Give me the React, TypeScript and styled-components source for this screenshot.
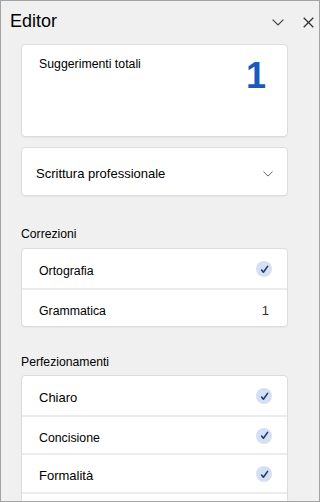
import React from "react";
import styled, { createGlobalStyle } from "styled-components";

const Global = createGlobalStyle`
  html, body { margin: 0; padding: 0; background: #f0f0f0; }
  * { box-sizing: border-box; }
  body { font-family: "Liberation Sans", Arial, sans-serif; color: #201f1e; }
`;

const Pane = styled.div`
  width: 320px;
  height: 502px;
  border: 1px solid #a3a3a3;
  background: #f0f0f0;
  overflow: hidden;
  display: flex;
  flex-direction: column;
`;

const Header = styled.header`
  height: 43px;
  flex: none;
  display: flex;
  align-items: flex-start;
  padding: 11px 1px 0 9px;
`;

const Title = styled.h1`
  flex: 1;
  margin: 0;
  font-size: 18px;
  line-height: 18px;
  font-weight: 400;
  color: #000;
`;

const HeaderActions = styled.div`
  display: flex;
  gap: 10px;
`;

const IconButton = styled.button`
  width: 20px;
  height: 20px;
  padding: 0;
  border: none;
  background: none;
  display: flex;
  align-items: center;
  justify-content: center;
  color: #3b3b3b;
`;

const Card = styled.div<{ $height?: number }>`
  flex: none;
  margin: 0 31px 0 20px;
  background: #fff;
  border: 1px solid #dcdcdc;
  border-radius: 4px;
  box-shadow: 0 1px 1px rgba(0, 0, 0, 0.04);
  ${(p) => (p.$height ? `height: ${p.$height}px;` : "")}
`;

const TotalsCard = styled(Card)`
  display: flex;
  justify-content: space-between;
  align-items: flex-start;
  padding: 11px 21px 0 17px;
`;

const TotalsLabel = styled.span`
  font-size: 12.3px;
  line-height: 16px;
  color: #000;
`;

const TotalsNumber = styled.span`
  font-size: 36px;
  line-height: 36px;
  font-weight: 700;
  color: #185abd;
  margin-top: 2px;
`;

const StyleCard = styled(Card)`
  margin-top: 10px;
  display: flex;
  align-items: center;
  justify-content: space-between;
  padding: 4px 14px 0 14px;
`;

const StyleLabel = styled.span`
  font-size: 13px;
  line-height: 16px;
  color: #000;
`;

const SectionLabel = styled.div<{ $top: number; $bottom: number }>`
  flex: none;
  margin: ${(p) => p.$top}px 0 ${(p) => p.$bottom}px 20px;
  font-size: 12.2px;
  line-height: 16px;
  color: #000;
`;

const Row = styled.div`
  height: 38.5px;
  display: flex;
  align-items: center;
  justify-content: space-between;
  padding: 6px 15px 0 17px;
  & + & {
    border-top: 2px solid #ececec;
  }
`;

const RowLabel = styled.span<{ $size?: number }>`
  font-size: ${(p) => p.$size ?? 12.3}px;
  line-height: 16px;
  color: #000;
`;

const Count = styled.span`
  font-size: 13px;
  line-height: 16px;
  color: #333;
  margin-right: 3px;
`;

const CheckBadge = styled.span`
  width: 16px;
  height: 16px;
  margin-top: -4px;
  border-radius: 50%;
  background: #d5e1f3;
  display: flex;
  align-items: center;
  justify-content: center;
`;

const Chevron = ({ w, h, color }: { w: number; h: number; color: string }) => (
  <svg width={w} height={h} viewBox="0 0 12 7" fill="none">
    <path d="M0.6 0.6 L6 6 L11.4 0.6" stroke={color} strokeWidth="1.2" />
  </svg>
);

const Check = () => (
  <CheckBadge>
    <svg width="9" height="9" viewBox="0 0 9 9" fill="none">
      <path d="M1.6 5 L3.4 7.2 L7.6 1.4" stroke="#1d3a7c" strokeWidth="1.6" strokeLinecap="round" strokeLinejoin="round" />
    </svg>
  </CheckBadge>
);

type Item = { label: string; size?: number; count?: number; empty?: boolean };

const corrections: Item[] = [
  { label: "Ortografia" },
  { label: "Grammatica", count: 1 },
];

const refinements: Item[] = [
  { label: "Chiaro", size: 13 },
  { label: "Concisione" },
  { label: "Formalità", size: 13 },
  { label: "", empty: true },
];

const List = ({ items }: { items: Item[] }) => (
  <Card>
    {items.map((it, i) => (
      <Row key={i}>
        {it.empty ? null : (
          <>
            <RowLabel $size={it.size}>{it.label}</RowLabel>
            {it.count !== undefined ? <Count>{it.count}</Count> : <Check />}
          </>
        )}
      </Row>
    ))}
  </Card>
);

export default function App() {
  return (
    <>
      <Global />
      <Pane>
        <Header>
          <Title>Editor</Title>
          <HeaderActions>
            <IconButton aria-label="Comprimi">
              <Chevron w={12} h={7} color="#444" />
            </IconButton>
            <IconButton aria-label="Chiudi">
              <svg width="11" height="11" viewBox="0 0 11 11" fill="none">
                <path d="M0.7 0.7 L10.3 10.3 M10.3 0.7 L0.7 10.3" stroke="#333" strokeWidth="1.3" />
              </svg>
            </IconButton>
          </HeaderActions>
        </Header>
        <TotalsCard $height={93}>
          <TotalsLabel>Suggerimenti totali</TotalsLabel>
          <TotalsNumber>1</TotalsNumber>
        </TotalsCard>
        <StyleCard $height={49}>
          <StyleLabel>Scrittura professionale</StyleLabel>
          <Chevron w={10} h={6} color="#666" />
        </StyleCard>
        <SectionLabel $top={30} $bottom={6}>Correzioni</SectionLabel>
        <List items={corrections} />
        <SectionLabel $top={27} $bottom={5}>Perfezionamenti</SectionLabel>
        <List items={refinements} />
      </Pane>
    </>
  );
}
